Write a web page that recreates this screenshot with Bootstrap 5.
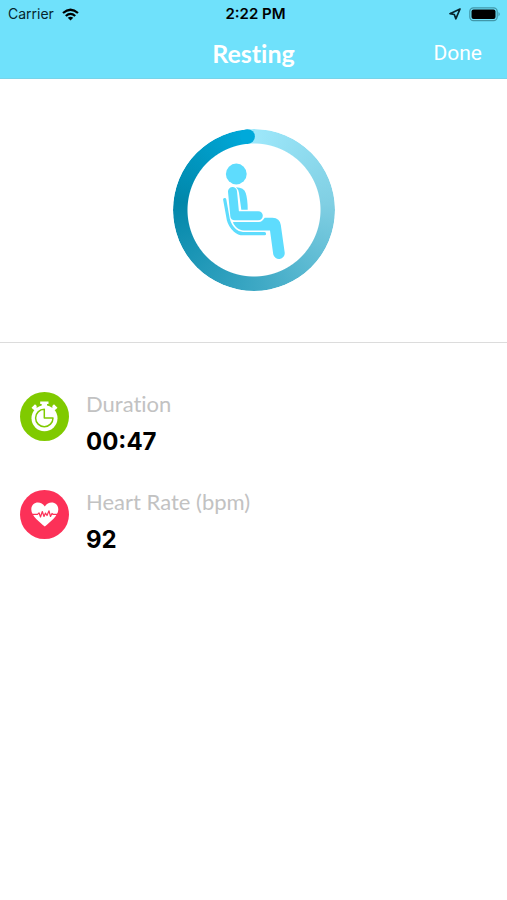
<!DOCTYPE html>
<html lang="en">
<head>
<meta charset="utf-8">
<meta name="viewport" content="width=device-width, initial-scale=1">
<title>Resting</title>
<link href="https://cdn.jsdelivr.net/npm/bootstrap@5.3.0/dist/css/bootstrap.min.css" rel="stylesheet">
<style>
body{font-family:Lato,"Liberation Sans",sans-serif;font-variant-ligatures:none;color:#000}
.app-top{background:#6fe1fb;border-bottom:1px solid #78d4e9}
.three{display:grid;grid-template-columns:1fr auto 1fr;align-items:center}
.status{height:28px;padding:0 6px 0 8px;font:400 14px/28px Inter,sans-serif;color:#06252d}
.status-time{padding-left:2px;font-size:15px;font-weight:600;color:#000}
.title-row{height:50px;padding:0 25px}
.title-row h1{font-size:25px;line-height:46px;font-weight:700}
.done{font:400 21px/48px Roboto,sans-serif}
.hero{padding:50px 0 51px;border-bottom:1px solid #dcdcdc}
.ring{width:162px;height:162px}
.ring-track{inset:0;border-radius:50%;background:conic-gradient(from 355deg,#9fe9fc,#80cfe3 25%,#3fa9c5 50%,#0187aa 78%,#00a9da);-webkit-mask:radial-gradient(circle,transparent 66px,#000 67px);mask:radial-gradient(circle,transparent 66px,#000 67px)}
.metrics{padding:49px 20px;gap:49px}
.metric{gap:17px}
.metric dl{height:49px}
.metric dt{font-size:22px;line-height:24px;font-weight:400;color:#c2c2c2}
.metric dd{font:700 24px/30px Inter,sans-serif;margin-top:11px}
</style>
<script src="https://cdn.jsdelivr.net/npm/bootstrap@5.3.0/dist/js/bootstrap.bundle.min.js"></script>
</head>
<body class="bg-white">
<header class="app-top">
  <div class="status three">
    <div class="d-flex align-items-center gap-2"><span>Carrier</span>
      <svg width="17" height="13" viewBox="0 0 17 13" fill="none" stroke="#000" stroke-width="2.3" aria-hidden="true"><path d="M1 5Q8.500-1.400 16 5M3.800 8Q8.500 3.800 13.200 8"/><path d="M8.500 12.500L5.700 9.700Q8.500 7.600 11.300 9.700Z" fill="#000" stroke="none"/></svg>
    </div>
    <span class="status-time">2:22 PM</span>
    <div class="d-flex align-items-center justify-content-end gap-2">
      <svg width="13" height="12" viewBox="0 0 13 12" fill="none" stroke="#06252d" stroke-width="1.700" stroke-linejoin="round" aria-hidden="true"><path d="M12 1L2 5.700L6.300 6.500L7.800 10.800Z"/></svg>
      <svg width="32" height="15" viewBox="0 0 32 15" aria-hidden="true"><rect x=".8" y=".8" width="27.400" height="12.900" rx="3.600" fill="none" stroke="#4197a9" stroke-width="1.200"/><rect x="2.500" y="2.500" width="24" height="9.500" rx="2"/><path d="M29.500 5Q32 7.200 29.500 9.500Z" fill="#4197a9"/></svg>
    </div>
  </div>
  <div class="title-row three text-white">
    <span></span><h1 class="m-0">Resting</h1>
    <button type="button" class="done btn p-0 border-0 text-white text-end">Done</button>
  </div>
</header>
<main>
  <section class="hero d-flex justify-content-center" aria-label="Resting progress">
    <div class="ring position-relative">
      <div class="ring-track position-absolute"></div>
      <svg class="position-relative d-block" width="162" height="162" viewBox="0 0 162 162" fill="#5edcfd" aria-hidden="true">
        <circle cx="74.500" cy="7.600" r="7.400" fill="#00a9da"/>
        <circle cx="63.300" cy="45" r="10.400"/>
        <path d="M63 58.300Q71 58.500 72.700 64Q74.700 70 74.700 80.700H68.300L66 64Q65.500 60.500 63 58.300Z"/>
        <path d="M59.500 62.500L61.800 86.700H85.300" fill="none" stroke="#5edcfd" stroke-width="9" stroke-linecap="round" stroke-linejoin="round"/>
        <path d="M51.700 70.500L55.300 90.500Q57 97 62 101.500Q65.500 104.700 70 104.700H91.500" fill="none" stroke="#5edcfd" stroke-width="3.200" stroke-linecap="round"/>
        <path d="M60 92.900H86Q89 92.900 91.700 88.700H99.500Q106.800 89 107.800 96L111.700 123.500A5.800 5.800 0 0 1 100.200 125L97 101.400H71Q66.500 101.400 63 98Q60 95 60 92.900Z"/>
      </svg>
    </div>
  </section>
  <section class="metrics d-flex flex-column" aria-label="Measurements">
    <div class="metric d-flex">
      <svg class="flex-shrink-0" width="49" height="49" viewBox="0 0 49 49" aria-hidden="true"><circle cx="24.500" cy="24.500" r="24.500" fill="#80ca00"/><g fill="#fff"><circle cx="24.500" cy="26.200" r="13"/><path d="M20.200 9.500H28.500V12H27V14H21.700V12H20.200ZM11.500 15.800L15 12.300L17 14.300L16.200 15.100L17.800 16.700L15.300 19.200L13.700 17.600L13.500 17.800ZM37.500 15.800L34 12.300L32 14.300L32.800 15.100L31.200 16.700L33.700 19.200L35.300 17.600L35.500 17.800Z"/></g><path d="M24.300 17.300V26H33A8.700 8.700 0 1 1 24.300 17.300Z" fill="#fff" stroke="#80ca00" stroke-width="1.500" stroke-linejoin="round"/></svg>
      <dl class="m-0"><dt>Duration</dt><dd class="mb-0">00:47</dd></dl>
    </div>
    <div class="metric d-flex">
      <svg class="flex-shrink-0" width="49" height="49" viewBox="0 0 49 49" aria-hidden="true"><circle cx="24.500" cy="24.500" r="24.500" fill="#fc3158"/><path d="M24.800 36.500C20 32.500 11.300 26 11.300 19.500C11.300 11.500 21 10.200 24.800 16.500C28.500 10.200 38.300 11.500 38.300 19.500C38.300 26 29.500 32.500 24.800 36.500Z" fill="#fff"/><path d="M11 24.300H17.500L19 22.800L20.500 27L22.300 21.500L24 26.500L25.500 23L27 25.500L29 20.800L30.500 26.500L32 23.500L33 24.300H39" fill="none" stroke="#fc3158" stroke-width="1.200" stroke-linejoin="round"/></svg>
      <dl class="m-0"><dt>Heart Rate (bpm)</dt><dd class="mb-0">92</dd></dl>
    </div>
  </section>
</main>
</body>
</html>
